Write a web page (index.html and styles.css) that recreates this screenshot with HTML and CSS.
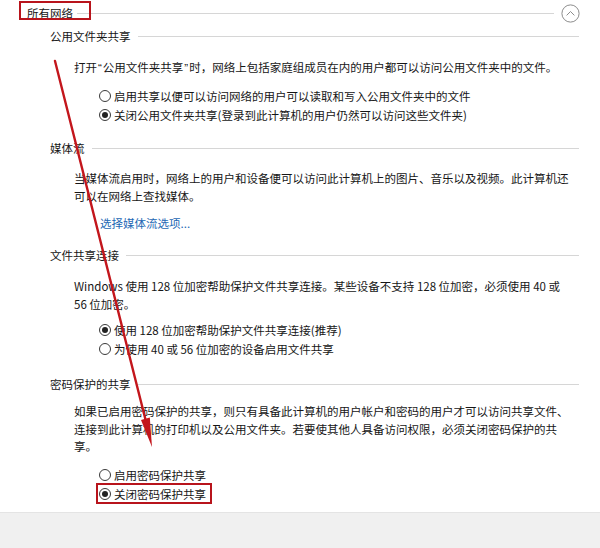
FILE: index.html
```html
<!DOCTYPE html>
<html lang="zh-CN">
<head>
<meta charset="utf-8">
<title>所有网络</title>
<link rel="stylesheet" href="styles.css">
</head>
<body>
<div class="page">
  <div class="content">
    <div class="header">
      <span class="header-title">所有网络</span>
      <span class="rule rule-header"></span>
      <span class="collapse">
        <svg width="19" height="19" viewBox="0 0 19 19"><circle cx="9.5" cy="9.5" r="8.6" fill="none" stroke="#8c8c8c" stroke-width="1"/><path d="M5.6 11.4 L9.5 7.5 L13.4 11.4" fill="none" stroke="#8c8c8c" stroke-width="1"/></svg>
      </span>
    </div>

    <div class="section s1">
      <div class="sec-title"><span>公用文件夹共享</span><span class="rule"></span></div>
      <p class="desc d1">打开<span class="q">“</span>公用文件夹共享<span class="q">”</span>时，网络上包括家庭组成员在内的用户都可以访问公用文件夹中的文件。</p>
      <div class="radios r1">
        <div class="radio"><span class="dot"></span>启用共享以便可以访问网络的用户可以读取和写入公用文件夹中的文件</div>
        <div class="radio"><span class="dot on"></span>关闭公用文件夹共享(登录到此计算机的用户仍然可以访问这些文件夹)</div>
      </div>
    </div>

    <div class="section s2">
      <div class="sec-title"><span>媒体流</span><span class="rule"></span></div>
      <p class="desc d2">当媒体流启用时，网络上的用户和设备便可以访问此计算机上的图片、音乐以及视频。此计算机还<br>可以在网络上查找媒体。</p>
      <a class="link" href="#">选择媒体流选项...</a>
    </div>

    <div class="section s3">
      <div class="sec-title"><span>文件共享连接</span><span class="rule"></span></div>
      <p class="desc d3">Windows 使用 128 位加密帮助保护文件共享连接。某些设备不支持 128 位加密，必须使用 40 或<br>56 位加密。</p>
      <div class="radios r3">
        <div class="radio"><span class="dot on"></span>使用 128 位加密帮助保护文件共享连接(推荐)</div>
        <div class="radio"><span class="dot"></span>为使用 40 或 56 位加密的设备启用文件共享</div>
      </div>
    </div>

    <div class="section s4">
      <div class="sec-title"><span>密码保护的共享</span><span class="rule"></span></div>
      <p class="desc d4">如果已启用密码保护的共享，则只有具备此计算机的用户帐户和密码的用户才可以访问共享文件、<br>连接到此计算机的打印机以及公用文件夹。若要使其他人具备访问权限，必须关闭密码保护的共<br>享。</p>
      <div class="radios r4">
        <div class="radio"><span class="dot"></span>启用密码保护共享</div>
        <div class="radio"><span class="dot on"></span>关闭密码保护共享</div>
      </div>
    </div>
  </div>
  <div class="footer"></div>

  <div class="mark mark-title"></div>
  <div class="mark mark-option"></div>
  <svg class="arrow" width="600" height="548" viewBox="0 0 600 548">
    <line x1="55" y1="61" x2="145.6" y2="420" stroke="#c3161c" stroke-width="2.4" stroke-linecap="round"/>
    <polygon points="152,447 149.8,417.6 141,419.9" fill="#c3161c"/>
  </svg>
</div>
</body>
</html>
```

FILE: styles.css
```css
html, body {
  margin: 0;
  padding: 0;
  background: #ffffff;
}

body {
  font-family: "Noto Sans CJK SC", "Microsoft YaHei", "DejaVu Sans", sans-serif;
  font-size: 11.5px;
  color: #161616;
}

.page {
  position: relative;
  width: 600px;
  height: 548px;
  display: flex;
  flex-direction: column;
  overflow: hidden;
}

.content {
  flex: 1;
}

.footer {
  height: 35px;
  background: #f0f0f0;
  border-top: 1px solid #e4e4e4;
}

.header {
  height: 26px;
  display: flex;
  align-items: center;
  padding-left: 27px;
  padding-right: 20px;
}

.header-title {
  line-height: 18px;
  white-space: nowrap;
}

.rule {
  flex: 1;
  height: 1px;
  background: #d6d6d6;
}

.rule-header {
  margin-left: 4px;
  margin-right: 7px;
}

.collapse {
  width: 19px;
  height: 19px;
  display: flex;
}

.section {
  padding-left: 50px;
  padding-right: 21px;
}

.sec-title {
  display: flex;
  align-items: center;
  line-height: 18px;
  white-space: nowrap;
}

.sec-title .rule {
  margin-left: 7px;
}

.s1 { margin-top: 1px; }
.s2 { margin-top: 15px; }
.s3 { margin-top: 14px; }
.s4 { margin-top: 17px; }

.desc {
  margin: 0;
  padding-left: 24px;
  line-height: 18px;
  white-space: nowrap;
}

.q {
  font-family: "Liberation Sans", sans-serif;
  margin: 0 1px;
}

.d1 { margin-top: 13px; }
.d2 { margin-top: 12px; }
.d3 { margin-top: 13px; }
.d4 { margin-top: 10px; line-height: 17.5px; }

.radios {
  padding-left: 49px;
}

.r1 { margin-top: 9px; }
.r3 { margin-top: 7px; }
.r4 { margin-top: 10px; }

.radio {
  height: 19px;
  display: flex;
  align-items: center;
  white-space: nowrap;
}

.dot {
  width: 10px;
  height: 10px;
  border: 1px solid #3a3a3a;
  border-radius: 50%;
  margin-right: 3px;
  display: flex;
  align-items: center;
  justify-content: center;
  box-sizing: content-box;
}

.dot.on::after {
  content: "";
  width: 6px;
  height: 6px;
  border-radius: 50%;
  background: #222222;
}

.link {
  display: block;
  margin-top: 9px;
  padding-left: 50px;
  line-height: 18px;
  color: #2368b4;
  text-decoration: none;
}

.mark {
  position: absolute;
  border: 2px solid #b8141c;
  box-sizing: border-box;
}

.mark-title {
  left: 19px;
  top: 1px;
  width: 72px;
  height: 19px;
}

.mark-option {
  left: 96px;
  top: 483px;
  width: 116px;
  height: 21px;
}

.arrow {
  position: absolute;
  left: 0;
  top: 0;
  pointer-events: none;
}
```
